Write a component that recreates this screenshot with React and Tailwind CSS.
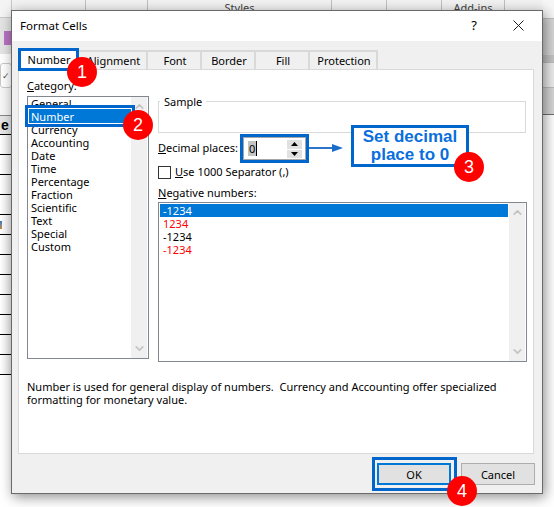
import React from 'react';
import { ChevronUp, ChevronDown } from 'lucide-react';

const tabs = [
  { name: 'Alignment', w: 'w-[69px]' },
  { name: 'Font', w: 'w-[54px]' },
  { name: 'Border', w: 'w-[54px]' },
  { name: 'Fill', w: 'w-[54px]' },
  { name: 'Protection', w: 'w-[68px]' },
];

const categories = ['General', 'Number', 'Currency', 'Accounting', 'Date', 'Time', 'Percentage', 'Fraction', 'Scientific', 'Text', 'Special', 'Custom'];

function Badge({ n, className }) {
  return (
    <div className={`absolute z-30 flex h-[30px] w-[30px] items-center justify-center rounded-full bg-[#ff0000] text-[18px] leading-none text-white font-['Liberation_Sans',sans-serif] ${className}`}>
      {n}
    </div>
  );
}

function ScrollBar({ className }) {
  return (
    <div className={`flex flex-col items-center justify-between bg-[#f0f0f0] py-[3px] text-[#c4c4c4] ${className}`}>
      <ChevronUp size={13} strokeWidth={3.2} />
      <ChevronDown size={13} strokeWidth={3.2} />
    </div>
  );
}

function Backdrop() {
  return (
    <div className="flex h-full w-full">
      <div className="flex w-[12px] shrink-0 flex-col">
        <div className="h-[18px] border-b border-r border-[#c8c8c8] bg-[#f4f4f4]" />
        <div className="h-[36px] bg-[#e4e4e4] pt-[13px]">
          <div className="ml-[4px] h-[14px] w-[8px] bg-[#b971c4]" />
        </div>
        <div className="h-[9px] bg-white" />
        <div className="flex h-[25px] items-center rounded-[3px] border border-[#c8c8c8] bg-white pl-[1px] text-[9px] leading-none text-[#555]">✓</div>
        <div className="h-[27px] bg-[#f7f7f7]" />
        <div className="flex h-[20px] items-center border-b border-r border-t border-black border-t-[#888] bg-[#e6e6e6] pl-[1px] text-[14px] font-bold leading-none font-['Liberation_Sans',sans-serif]">e</div>
        {[0, 1, 2, 3, 4, 5, 6, 7, 8, 9, 10, 11].map((i) => (
          <div key={i} className="flex h-[20px] items-center border-b border-r border-black bg-gradient-to-r from-white to-[#e9e9e9]">
            {i === 4 && <div className="h-[8px] w-[2px] bg-gradient-to-b from-[#2a75c9] to-[#c98a2a]" />}
          </div>
        ))}
      </div>
      <div className="flex h-[20px] flex-1 bg-[#f2f2f2] font-['Noto_Sans',sans-serif] text-[11px] text-[#444]">
        <div className="w-[74px] border-r border-[#c0c0c0]" />
        <div className="w-[62px] border-r border-[#c0c0c0]" />
        <div className="flex w-[184px] justify-center border-r border-[#c0c0c0] pt-[1px]">Styles</div>
        <div className="w-[55px] border-r border-[#c0c0c0]" />
        <div className="w-[55px] border-r border-[#c0c0c0]" />
        <div className="flex w-[63px] justify-center border-r border-[#c0c0c0] pt-[1px]">Add-ins</div>
      </div>
      <div className="flex w-[11px] shrink-0 flex-col">
        <div className="h-[19px] border-b border-[#bdbdbd] bg-[#f6f6f6]" />
        <div className="h-[36px] bg-[#d6d6d6]" />
        <div className="h-[8px] border-b border-[#bdbdbd] bg-[#c4c4c4]" />
        <div className="h-[25px] border-b border-[#bdbdbd] bg-[#ececec]" />
        <div className="h-[27px] border-b border-[#6e6e6e] bg-[#d6d6d6]" />
      </div>
    </div>
  );
}

export default function App() {
  return (
    <div className="relative h-[507px] w-[554px] overflow-hidden bg-white font-['Noto_Sans',sans-serif] text-[11px] leading-[13px] text-black">
      <div className="absolute inset-0">
        <Backdrop />
      </div>

      {/* dialog window */}
      <div className="absolute left-[11px] top-[10px] flex h-[484px] w-[532px] flex-col border border-[#6a6a6a] bg-[#f0f0f0] shadow-[2px_3px_12px_rgba(0,0,0,0.45)]">
        <div className="flex h-[30px] items-center justify-between bg-white pb-[2px] pl-[8px] pr-[18px]">
          <span className="text-[11.5px]">Format Cells</span>
          <div className="flex items-center gap-[36px]">
            <span className="text-[13px]">?</span>
            <svg width="11" height="11" viewBox="0 0 11 11" fill="none" stroke="#222" strokeWidth="1">
              <path d="M0.5 0.5l10 10M10.5 0.5l-10 10" />
            </svg>
          </div>
        </div>

        {/* tabs */}
        <div className="mt-[9px] flex h-[19px] items-stretch pl-[7px]">
          <div className="flex w-[60px] items-center justify-center bg-white">Number</div>
          {tabs.map((t) => (
            <div key={t.name} className={`flex items-center justify-center border-r-2 border-t-2 border-[#d9d9d9] pl-[2px] ${t.w}`}>
              {t.name}
            </div>
          ))}
        </div>

        {/* panel */}
        <div className="ml-[6px] h-[385px] w-[516px] border border-[#d9d9d9] bg-white pl-[8px]">
          <div className="flex gap-[9px]">
            <div className="w-[122px]">
              <div className="pt-[9px]"><u>C</u>ategory:</div>
              <div className="mt-[4px] flex h-[263px] border border-[#828790]">
                <div className="relative z-10 w-[103px]">
                  {categories.map((c) =>
                    c === 'Number' ? (
                      <div key={c} className="relative h-[13px] pl-[3px]">
                        <div className="absolute left-[-3px] top-[-5px] h-[22px] w-[110px] border-[3px] border-[#0066cc]">
                          <div className="h-full w-full border border-white bg-[#0078d7]" />
                        </div>
                        <span className="relative text-white">{c}</span>
                      </div>
                    ) : (
                      <div key={c} className="h-[13px] pl-[3px]">{c}</div>
                    )
                  )}
                </div>
                <ScrollBar className="w-[16px]" />
              </div>
            </div>

            <div className="w-[369px]">
              <fieldset className="mt-[25px] h-[38px] w-[368px] border border-[#d9d9d9]">
                <legend className="ml-[1px] px-[4px] leading-[13px]">Sample</legend>
              </fieldset>

              <div className="mt-[1px] flex h-[29px] items-center">
                <div className="w-[82px] pb-[2px]"><u>D</u>ecimal places:</div>
                <div className="flex h-[29px] w-[69px] border-[3px] border-[#0066cc]">
                  <div className="flex h-[23px] w-[63px] items-center border border-[#a6a6a6] pl-[4px] pr-[3px]">
                    <div className="flex h-[15px] flex-1 items-center">
                      <span className="h-[15px] bg-[#c4c4c4] px-[1px] leading-[15px]">0</span>
                      <span className="h-[15px] w-[1px] bg-black" />
                    </div>
                    <div className="flex h-[18px] w-[15px] flex-col justify-between">
                      <div className="flex h-[9px] items-center justify-center bg-[#e1e1e1]">
                        <svg width="7" height="4" viewBox="0 0 7 4"><path d="M3.5 0L7 4H0z" fill="#000" /></svg>
                      </div>
                      <div className="flex h-[8px] items-center justify-center bg-[#e1e1e1]">
                        <svg width="7" height="4" viewBox="0 0 7 4"><path d="M0 0h7L3.5 4z" fill="#000" /></svg>
                      </div>
                    </div>
                  </div>
                </div>
              </div>

              <div className="mt-[3px] flex h-[13px] items-center gap-[4px]">
                <div className="h-[13px] w-[13px] border border-[#333] bg-white" />
                <div className="pb-[2px]"><u>U</u>se 1000 Separator (,)</div>
              </div>

              <div className="mt-[8px] h-[13px] leading-[11px]"><u>N</u>egative numbers:</div>
              <div className="mt-[2px] flex h-[160px] border border-[#828790] p-[1px]">
                <div className="w-[349px]">
                  <div className="h-[13px] bg-[#0078d7] pl-[3px] text-white">-1234</div>
                  <div className="h-[13px] pl-[3px] text-[#ff0000]">1234</div>
                  <div className="h-[13px] pl-[3px]">-1234</div>
                  <div className="h-[13px] pl-[3px] text-[#ff0000]">-1234</div>
                </div>
                <ScrollBar className="-my-[1px] ml-[1px] w-[16px]" />
              </div>
            </div>
          </div>

          <p className="mt-[18px]">
            Number is used for general display of numbers.&nbsp; Currency and Accounting offer specialized<br />
            formatting for monetary value.
          </p>
        </div>

        {/* footer */}
        <div className="mt-[9px] flex justify-end gap-[10px] pr-[7px]">
          <button className="h-[22px] w-[74px] border-2 border-[#0078d7] bg-[#e1e1e1]">OK</button>
          <button className="h-[22px] w-[74px] border border-[#adadad] bg-[#e1e1e1]">Cancel</button>
        </div>
      </div>

      {/* annotations */}
      <div className="absolute left-[18px] top-[48px] z-20 h-[23px] w-[61px] border-[3px] border-[#0066cc]" />
      <div className="absolute left-[372px] top-[457px] z-20 h-[34px] w-[85px] border-[3px] border-[#0066cc]" />
      <svg className="absolute left-[309px] top-[141px] z-20" width="36" height="14" viewBox="0 0 36 14">
        <path d="M0 7h26" stroke="#2a75c9" strokeWidth="2" fill="none" />
        <path d="M23 3l11 4-11 4z" fill="#1b6cc8" />
      </svg>
      <div className="absolute left-[351px] top-[125px] z-20 flex h-[42px] w-[118px] flex-col items-center justify-center border-[3px] border-[#0066cc] bg-white text-center font-['Liberation_Sans',sans-serif] text-[17px] font-bold leading-[18px] text-[#0a6fdc]">
        <div>Set decimal</div>
        <div>place to 0</div>
      </div>
      <Badge n="1" className="left-[67px] top-[57px]" />
      <Badge n="2" className="left-[123px] top-[110px]" />
      <Badge n="3" className="left-[454px] top-[152px]" />
      <Badge n="4" className="left-[447px] top-[476px]" />
    </div>
  );
}
